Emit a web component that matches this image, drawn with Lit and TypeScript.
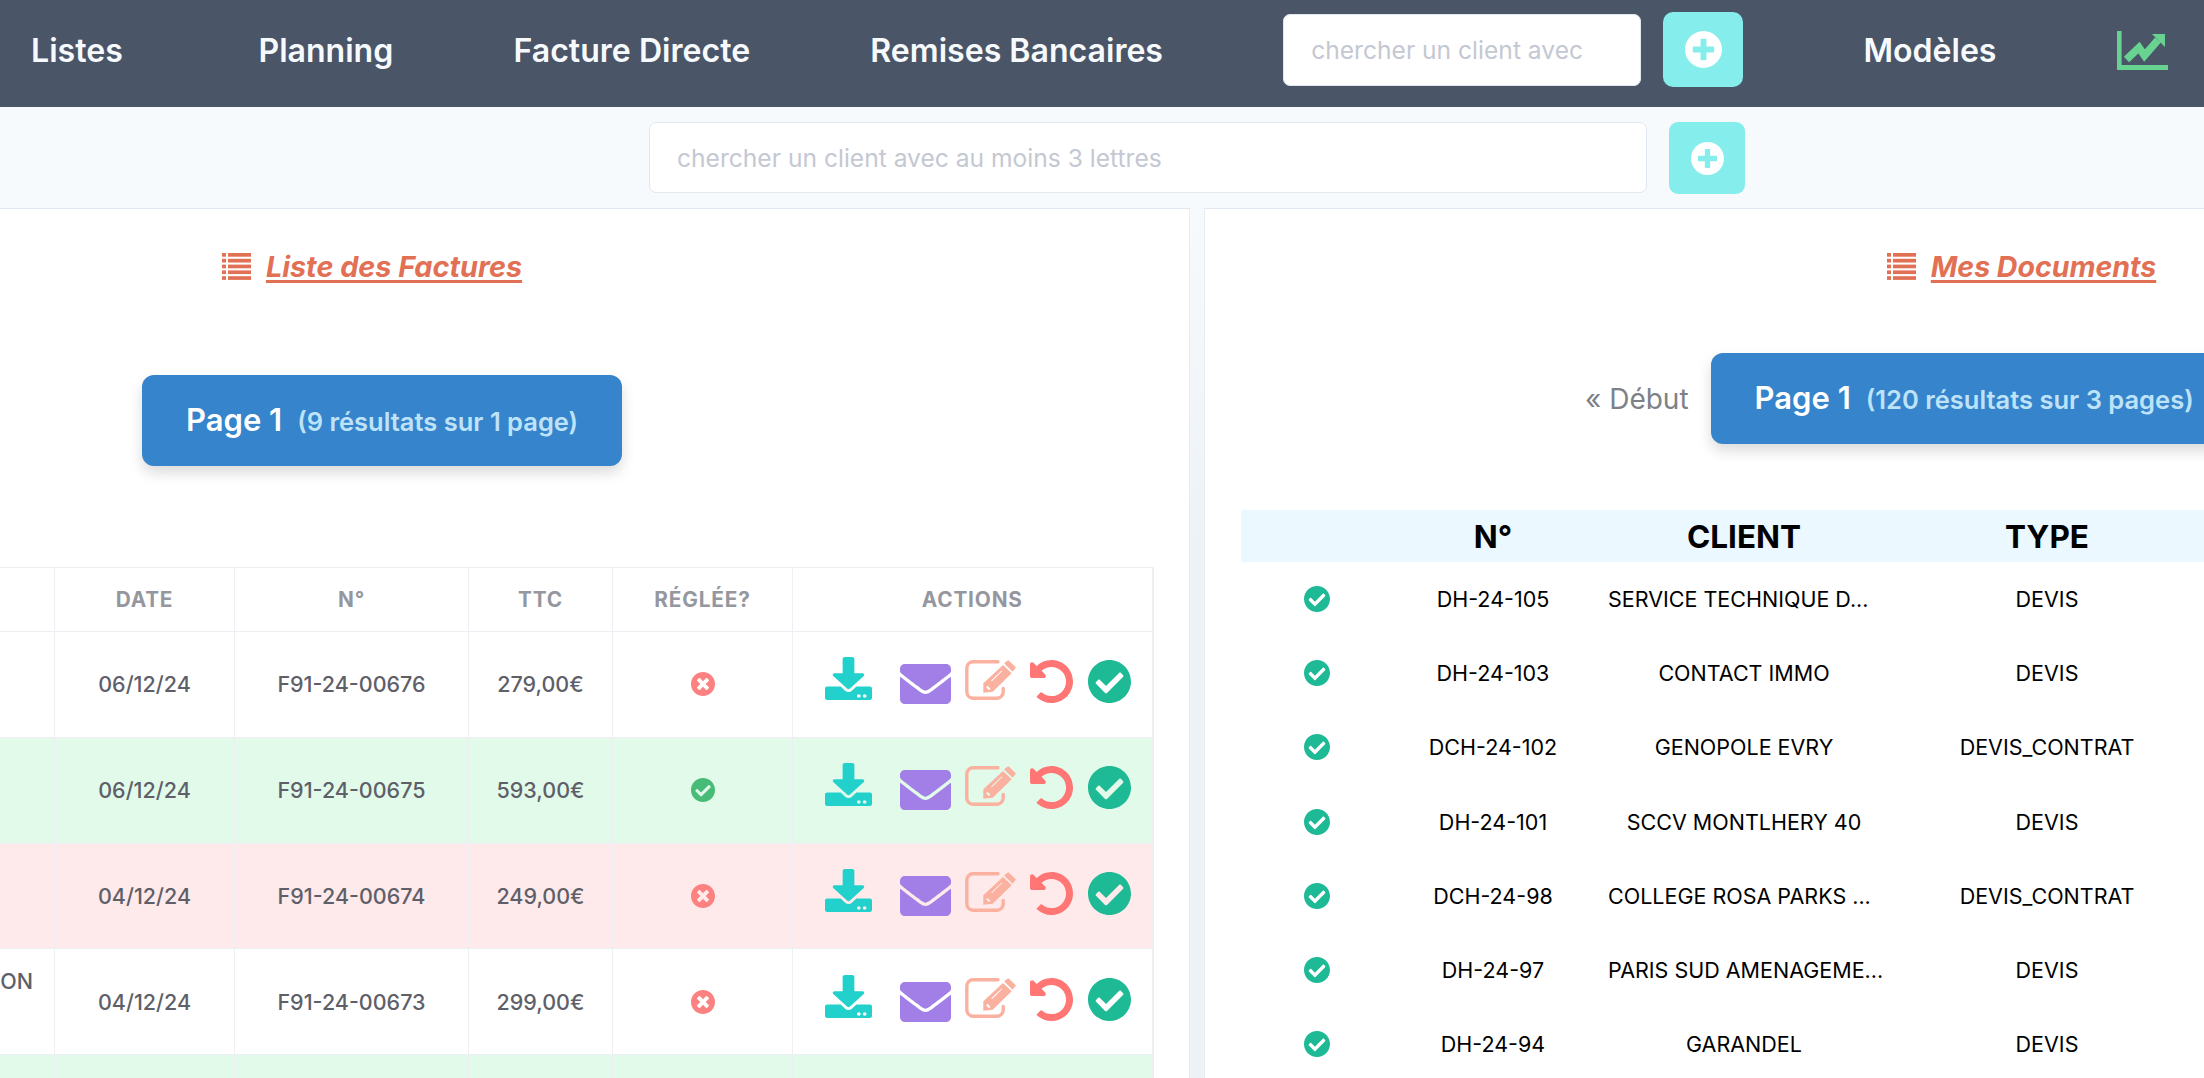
import { LitElement, html, css, svg } from 'lit';
import { customElement } from 'lit/decorators.js';

const PLUS = 'M256 8C119 8 8 119 8 256s111 248 248 248 248-111 248-248S393 8 256 8zm144 276c0 6.6-5.4 12-12 12h-92v92c0 6.6-5.4 12-12 12h-56c-6.6 0-12-5.4-12-12v-92h-92c-6.6 0-12-5.4-12-12v-56c0-6.6 5.4-12 12-12h92v-92c0-6.6 5.4-12 12-12h56c6.6 0 12 5.4 12 12v92h92c6.6 0 12 5.4 12 12v56z';
const CHECK = 'M504 256c0 136.967-111.033 248-248 248S8 392.967 8 256 119.033 8 256 8s248 111.033 248 248zM227.314 387.314l184-184c6.248-6.248 6.248-16.379 0-22.627l-22.627-22.627c-6.248-6.249-16.379-6.249-22.628 0L216 308.118l-70.059-70.059c-6.248-6.248-16.379-6.248-22.628 0l-22.627 22.627c-6.248 6.248-6.248 16.379 0 22.627l104 104c6.249 6.249 16.379 6.249 22.628.001z';
const TIMES = 'M256 8C119 8 8 119 8 256s111 248 248 248 248-111 248-248S393 8 256 8zm121.6 313.1c4.7 4.7 4.7 12.3 0 17L338 377.6c-4.7 4.7-12.3 4.7-17 0L256 312l-65.1 65.6c-4.7 4.7-12.3 4.7-17 0L134.4 338c-4.7-4.7-4.7-12.3 0-17l65.6-65-65.6-65.1c-4.7-4.7-4.7-12.3 0-17l39.6-39.6c4.7-4.7 12.3-4.7 17 0l65 65.7 65.1-65.6c4.7-4.7 12.3-4.7 17 0l39.6 39.6c4.7 4.7 4.7 12.3 0 17L312 256l65.6 65.1z';
const DOWNLOAD = 'M216 0h80c13.3 0 24 10.7 24 24v168h87.7c17.8 0 26.7 21.5 14.1 34.1L269.7 378.3c-7.5 7.5-19.8 7.5-27.3 0L90.1 226.1c-12.6-12.6-3.7-34.1 14.1-34.1H192V24c0-13.3 10.7-24 24-24zm296 376v112c0 13.3-10.7 24-24 24H24c-13.3 0-24-10.7-24-24V376c0-13.3 10.7-24 24-24h146.7l49 49c20.1 20.1 52.5 20.1 72.6 0l49-49H488c13.3 0 24 10.7 24 24zm-124 88c0-11-9-20-20-20s-20 9-20 20 9 20 20 20 20-9 20-20zm64 0c0-11-9-20-20-20s-20 9-20 20 9 20 20 20 20-9 20-20z';
const ENVELOPE = 'M502.3 190.8c3.9-3.1 9.7-.2 9.7 4.7V400c0 26.5-21.5 48-48 48H48c-26.5 0-48-21.5-48-48V195.6c0-5 5.7-7.8 9.7-4.7 22.4 17.4 52.1 39.5 154.1 113.6 21.1 15.4 56.7 47.8 92.2 47.6 35.7.3 72-32.8 92.3-47.6 102-74.1 131.6-96.3 154-113.7zM256 320c23.2.4 56.6-29.2 73.4-41.4 132.7-96.3 142.8-104.7 173.4-128.7 5.8-4.5 9.2-11.5 9.2-18.9v-19c0-26.5-21.5-48-48-48H48C21.5 64 0 85.5 0 112v19c0 7.4 3.4 14.3 9.2 18.9 30.6 23.9 40.7 32.4 173.4 128.7 16.8 12.2 50.2 41.8 73.4 41.4z';
const UNDO = 'M255.545 8c-66.269.119-126.438 26.233-170.86 68.685L48.971 40.971C33.851 25.851 8 36.559 8 57.941V192c0 13.255 10.745 24 24 24h134.059c21.382 0 32.09-25.851 16.971-40.971l-41.75-41.75c30.864-28.899 70.801-44.907 113.23-45.273 92.398-.798 170.283 73.977 169.484 169.442C423.236 348.009 349.816 424 256 424c-41.127 0-79.997-14.678-110.63-41.556-4.743-4.161-11.906-3.908-16.368.553L89.34 422.659c-4.872 4.872-4.631 12.815.482 17.433C133.798 479.813 192.074 504 256 504c136.966 0 247.999-111.033 248-247.998C504.001 119.193 392.354 7.755 255.545 8z';

const plusIcon = (size: number) => html`<svg width=${size} height=${size} viewBox="8 8 496 496"><path fill="#fff" d=${PLUS}></path></svg>`;
const circleIcon = (d: string, size: number, color: string) => html`<svg width=${size} height=${size} viewBox="8 8 496 496"><path fill=${color} d=${d}></path></svg>`;

const listIcon = html`<svg width="29" height="27" viewBox="0 0 29 27" fill="currentColor">
  ${[0, 5.8, 11.6, 17.4, 23.2].map(y => svg`<rect x="0" y=${y} width="4" height="3.7"></rect><rect x="6" y=${y} width="23" height="3.7"></rect>`)}
</svg>`;

const chartIcon = html`<svg width="51" height="39" viewBox="0 0 51 39">
  <path fill="#68d391" d="M0 0h4.6v34h46.4v5H0z"></path>
  <path fill="none" stroke="#68d391" stroke-width="7.6" stroke-linejoin="miter" d="M9.5 28.5L22 16.5l5.5 8L41 9"></path>
  <path fill="#68d391" d="M35 3h13v13z"></path>
</svg>`;

const editIcon = html`<svg class="ic-edit" width="51" height="40" viewBox="0 0 51 40">
  <path fill="none" stroke="#fab1a0" stroke-width="3.4" stroke-linecap="round" d="M33 1.8H8A6.2 6.2 0 0 0 1.8 8v24A6.2 6.2 0 0 0 8 38.2h24A6.2 6.2 0 0 0 38.2 32v-3.5"></path>
  <path fill="#fab1a0" fill-rule="evenodd" d="M18.3 32.7V23.3L38 5l8.7 8.3-19 18.4zM21 27.2l1.5-1.5 3 3-1.5 1.5zM26.2 20.6l10.4-10.2.7.7-10.4 10.2z"></path>
  <path fill="#fab1a0" stroke="#fab1a0" stroke-width="1.5" stroke-linejoin="round" d="M40.2 3.4l3-2.4 6.8 6.6-2.4 3z"></path>
</svg>`;

const actionIcons = html`<div class="actions">
  <svg class="ic-dl" width="47" height="43" viewBox="0 0 512 512" preserveAspectRatio="none"><path fill="#22d1cc" d=${DOWNLOAD}></path></svg>
  <svg class="ic-mail" width="51" height="40" viewBox="0 64 512 384" preserveAspectRatio="none"><path fill="#a17fe6" d=${ENVELOPE}></path></svg>
  ${editIcon}
  ${circleIcon(UNDO, 43, '#ff7675')}
  ${circleIcon(CHECK, 43, '#1eb995')}
</div>`;

const factures = [
  { tone: '', first: '', date: '06/12/24', num: 'F91-24-00676', ttc: '279,00€', ok: false },
  { tone: 'green', first: '', date: '06/12/24', num: 'F91-24-00675', ttc: '593,00€', ok: true },
  { tone: 'red', first: '', date: '04/12/24', num: 'F91-24-00674', ttc: '249,00€', ok: false },
  { tone: '', first: 'ON', date: '04/12/24', num: 'F91-24-00673', ttc: '299,00€', ok: false },
];

const documents = [
  { num: 'DH-24-105', client: 'SERVICE TECHNIQUE D...', type: 'DEVIS', cut: true },
  { num: 'DH-24-103', client: 'CONTACT IMMO', type: 'DEVIS', cut: false },
  { num: 'DCH-24-102', client: 'GENOPOLE EVRY', type: 'DEVIS_CONTRAT', cut: false },
  { num: 'DH-24-101', client: 'SCCV MONTLHERY 40', type: 'DEVIS', cut: false },
  { num: 'DCH-24-98', client: 'COLLEGE ROSA PARKS ...', type: 'DEVIS_CONTRAT', cut: true },
  { num: 'DH-24-97', client: 'PARIS SUD AMENAGEME...', type: 'DEVIS', cut: true },
  { num: 'DH-24-94', client: 'GARANDEL', type: 'DEVIS', cut: false },
];

@customElement('app-root')
export class AppRoot extends LitElement {
  static styles = css`
    :host {
      display: block;
      width: 2204px;
      height: 1078px;
      overflow: hidden;
      font-family: Inter, "Liberation Sans", sans-serif;
      color: #000;
    }
    svg { display: block; flex: none; }

    .nav {
      height: 107px;
      background: #4a5568;
      display: flex;
      align-items: center;
      gap: 120.2px;
      padding: 0 0 7px 31px;
      box-sizing: border-box;
      white-space: nowrap;
    }
    .nav a {
      color: #f7fafc;
      font-size: 32.1px;
      font-weight: 600;
    }
    .nav a.first { margin-right: 15.5px; }
    .nav-search { display: flex; align-items: center; gap: 22px; }
    .nav-search input { width: 358px; height: 72px; }
    .nav-search .add { width: 80px; height: 75px; border-radius: 10px; margin-top: -1px; }

    input {
      box-sizing: border-box;
      background: #fff;
      border: 1px solid #e2e8f0;
      border-radius: 7px;
      padding: 0 27px;
      font: 400 24.6px Inter, "Liberation Sans", sans-serif;
      outline: none;
    }
    input::placeholder { color: #c4c8d2; opacity: 1; }

    .add {
      background: #85eeec;
      display: flex;
      align-items: center;
      justify-content: center;
    }

    .sub {
      height: 101px;
      background: #f7fafc;
      box-sizing: border-box;
      padding: 15px 0 0 649px;
      display: flex;
      gap: 22px;
    }
    .sub input { width: 998px; height: 71px; }
    .sub .add { width: 76px; height: 72px; border-radius: 9px; }

    .main {
      display: flex;
      gap: 14px;
      height: 870px;
      margin-left: -447px;
      background: linear-gradient(#f7fafc, #edf2f7 40%);
    }
    .panel {
      flex: none;
      box-sizing: border-box;
      height: 890px;
      background: #fff;
      border-top: 1px solid #e2e8f0;
      border-left: 1px solid #e8edf3;
      border-right: 1px solid #e8edf3;
      padding-top: 37px;
    }
    .panel.left { width: 1637px; }
    .panel.right { width: 1628px; }

    .title {
      display: flex;
      align-items: center;
      justify-content: center;
      gap: 15px;
      height: 40px;
      color: #e17055;
      font-size: 28.8px;
      font-weight: 700;
      font-style: italic;
      text-decoration: underline;
      text-decoration-thickness: 2.5px;
      text-underline-offset: 3px;
    }
    .left .title { margin-left: 1px; }
    .right .title { margin-left: 7px; font-size: 28.5px; }

    .pager { display: flex; align-items: center; }
    .left .pager { margin: 89px 0 0 588px; }
    .right .pager { margin: 67px 0 0 380px; gap: 22px; }
    .start { color: #7d8187; font-size: 28px; }
    .page {
      display: flex;
      align-items: baseline;
      gap: 15px;
      height: 91px;
      box-sizing: border-box;
      padding: 26px 44px 0;
      background: #3584cc;
      border-radius: 12px;
      box-shadow: 0 7px 14px rgba(0, 0, 0, 0.14);
      color: #fff;
      font-size: 31px;
      font-weight: 600;
      white-space: nowrap;
    }
    .page small { color: #bee3f8; font-size: 25.5px; font-weight: 600; }

    .fact {
      margin: 101px 0 0 201px;
      width: 1397px;
      table-layout: fixed;
      border-collapse: collapse;
      border-right: 2px solid #edeff5;
      color: #5e5f69;
      font-size: 21.5px;
      font-weight: 500;
      text-align: center;
    }
    .fact th, .fact td { border: 1px solid #edeff5; padding: 0; }
    .fact th {
      height: 63px;
      color: #95979f;
      font-size: 20.8px;
      font-weight: 700;
      letter-spacing: 0.04em;
    }
    .fact td { height: 104.8px; }
    .fact .status svg { margin: 0 auto; }
    .fact tr.green td { background: #e2faea; }
    .fact tr.red td { background: #feeaea; }
    .fact td.first { text-align: right; padding-right: 21px; line-height: 42px; }

    .actions { display: flex; align-items: center; padding: 0 0 5px 32px; }
    .ic-dl { margin: 0 28px 6px 0; }
    .ic-mail { margin: 5px 14px 0 0; }
    .ic-edit { margin: 0 14px 3px 0; }
    .actions svg:nth-child(4) { margin-right: 15px; }

    .docs {
      margin: 66px 0 0 36px;
      width: 1900px;
      table-layout: fixed;
      border-collapse: collapse;
      text-align: center;
      font-size: 21.5px;
    }
    .docs th {
      height: 52px;
      padding: 0;
      background: #ebf8ff;
      font-size: 31.5px;
      font-weight: 700;
    }
    .docs td { height: 74.2px; padding: 0; white-space: nowrap; }
    .docs td svg { margin: 0 auto; }
    .docs td.cut { text-align: left; padding-left: 15px; }
  `;

  render() {
    return html`
      <div class="nav">
        <a class="first">Listes</a>
        <a>Planning</a>
        <a>Facture Directe</a>
        <a>Remises Bancaires</a>
        <div class="nav-search">
          <input placeholder="chercher un client avec" />
          <div class="add">${plusIcon(37)}</div>
        </div>
        <a>Modèles</a>
        ${chartIcon}
      </div>
      <div class="sub">
        <input placeholder="chercher un client avec au moins 3 lettres" />
        <div class="add">${plusIcon(33)}</div>
      </div>
      <div class="main">
        <section class="panel left">
          <div class="title">${listIcon}<span>Liste des Factures</span></div>
          <div class="pager">
            <div class="page">Page 1 <small>(9 résultats sur 1 page)</small></div>
          </div>
          ${this.renderFactures()}
        </section>
        <section class="panel right">
          <div class="title">${listIcon}<span>Mes Documents</span></div>
          <div class="pager">
            <span class="start">« Début</span>
            <div class="page">Page 1 <small>(120 résultats sur 3 pages)</small></div>
          </div>
          ${this.renderDocuments()}
        </section>
      </div>
    `;
  }

  renderFactures() {
    return html`
      <table class="fact">
        <colgroup>
          <col style="width:299px" /><col style="width:180px" /><col style="width:234px" />
          <col style="width:144px" /><col style="width:180px" /><col style="width:360px" />
        </colgroup>
        <thead>
          <tr><th></th><th>DATE</th><th>N°</th><th>TTC</th><th>RÉGLÉE?</th><th>ACTIONS</th></tr>
        </thead>
        <tbody>
          ${factures.map(f => html`
            <tr class=${f.tone}>
              <td class="first">${f.first ? html`${f.first}<br />&nbsp;` : ''}</td>
              <td>${f.date}</td>
              <td>${f.num}</td>
              <td>${f.ttc}</td>
              <td class="status">${f.ok ? circleIcon(CHECK, 24, '#48bb78') : circleIcon(TIMES, 24, '#fc8181')}</td>
              <td>${actionIcons}</td>
            </tr>
          `)}
          <tr class="green"><td></td><td></td><td></td><td></td><td></td><td></td></tr>
        </tbody>
      </table>
    `;
  }

  renderDocuments() {
    return html`
      <table class="docs">
        <colgroup>
          <col style="width:152px" /><col style="width:200px" /><col style="width:302px" />
          <col style="width:304px" /><col />
        </colgroup>
        <thead>
          <tr><th></th><th>N°</th><th>CLIENT</th><th>TYPE</th><th></th></tr>
        </thead>
        <tbody>
          ${documents.map(d => html`
            <tr>
              <td>${circleIcon(CHECK, 26, '#1eb995')}</td>
              <td>${d.num}</td>
              <td class=${d.cut ? 'cut' : ''}>${d.client}</td>
              <td>${d.type}</td>
              <td></td>
            </tr>
          `)}
        </tbody>
      </table>
    `;
  }
}
